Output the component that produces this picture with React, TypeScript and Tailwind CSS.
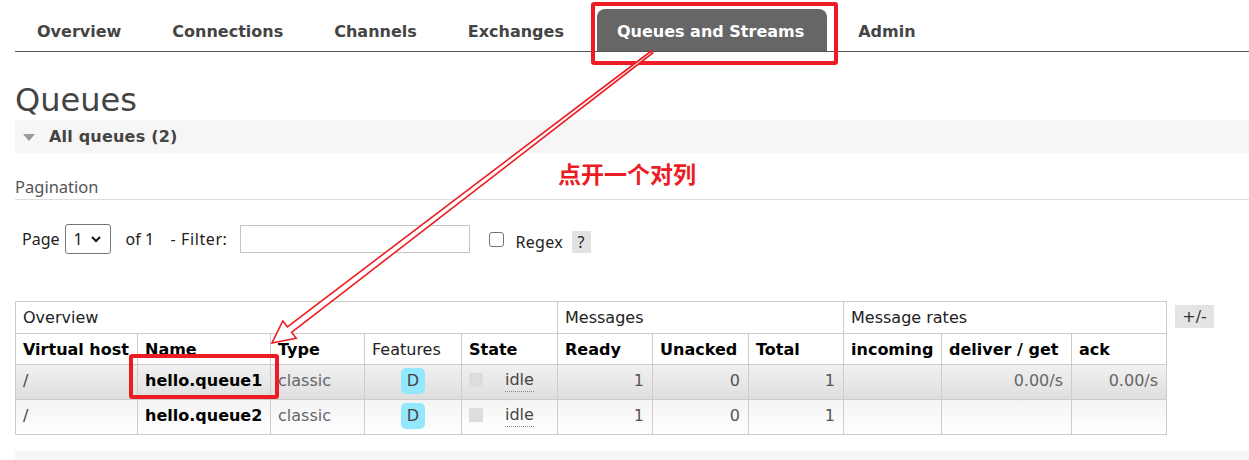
import React from "react";

const V = { fontFamily: '"DejaVu Sans", Verdana, sans-serif' };
const S = { fontFamily: '"Noto Sans", "Open Sans", sans-serif' };

const tabs = ["Overview", "Connections", "Channels", "Exchanges", "Queues and Streams", "Admin"];

function Badge() {
  return (
    <span className="inline-flex items-center justify-center w-[24px] h-[26px] rounded-[5px] bg-[#93e8fd] text-[#444] text-[16px]">D</span>
  );
}

function State() {
  return (
    <div className="flex items-start">
      <span className="inline-block w-[14px] h-[14px] bg-[#dddddd] mt-[7px]"></span>
      <span className="ml-[22px] mt-[2px] text-[#444] border-b border-dotted border-[#888] leading-[23px]">idle</span>
    </div>
  );
}

export default function App() {
  const th = "border border-[#cccccc] px-[7px] text-left align-middle";
  const td = "border border-[#cccccc] px-[7px] align-top pt-[4px]";
  const rows = [
    { name: "hello.queue1", del: "0.00/s", ack: "0.00/s", bg: "bg-gradient-to-b from-[#f1f1f1] to-[#dedede]" },
    { name: "hello.queue2", del: "", ack: "", bg: "bg-gradient-to-b from-[#f4f4f4] to-[#ffffff]" },
  ];
  return (
    <div className="relative w-[1249px] h-[460px] overflow-hidden bg-white text-[16px] leading-6" style={V}>
      <div className="pl-[15px]">
        {/* tabs */}
        <div className="flex items-end pt-[9px] border-b border-[#555555] pl-[2px] gap-[11px]">
          {tabs.map((t) => {
            const active = t === "Queues and Streams";
            return (
              <div
                key={t}
                className={
                  "h-[42px] flex items-center pt-[3px] font-bold text-[16px] " +
                  (active
                    ? "bg-[#666666] text-white rounded-t-[8px] ml-[2px] pl-[20px] pr-[23px]"
                    : "px-5 text-[#444444]")
                }
              >
                {t}
              </div>
            );
          })}
        </div>

        <h1 className="mt-[30px] text-[32px] leading-[36px] text-[#444444] font-normal">Queues</h1>

        <div className="mt-[2px] h-[33px] bg-[#f6f6f6] flex items-center pl-[8px]">
          <svg width="12" height="7" viewBox="0 0 12 7" className="mt-[1px]">
            <polygon points="0,0 12,0 6,7" fill="#999999" />
          </svg>
          <span className="ml-[14px] font-bold text-[#444444] tracking-[0.2px]">All queues (2)</span>
        </div>

        <div className="mt-[23px] border-b border-[#dddddd] pb-[2px] text-[16.5px] leading-[21px] text-[#555555]" style={S}>
          Pagination
        </div>

        <div className="mt-[24px] h-[30px] flex items-center pl-[7px] text-[16px] text-[#222]" style={S}>
          <span>Page</span>
          <div className="ml-[5px] w-[46px] h-[30px] border border-[#767676] rounded-[3px] flex items-center pl-[8px]">
            <span>1</span>
            <svg width="10" height="7" viewBox="0 0 10 7" className="ml-[8px]">
              <polyline points="1,1 5,5 9,1" fill="none" stroke="#111" strokeWidth="2" />
            </svg>
          </div>
          <span className="ml-[15px] w-[31px] whitespace-nowrap">of 1</span>
          <span className="ml-[14px] w-[62px] whitespace-nowrap tracking-[0.6px]">- Filter:</span>
          <div className="ml-[7px] w-[230px] h-[28px] border border-[#c4c4c4]"></div>
          <div className="ml-[19px] w-[15px] h-[15px] border border-[#767676] rounded-[3px]"></div>
          <span className="ml-[12px] mt-[5px] w-[50px] tracking-[0.3px]">Regex</span>
          <span className="ml-[6px] mt-[5px] w-[19px] h-[22px] bg-[#e2e2e2] flex items-center justify-center">?</span>
        </div>

        <div className="mt-[47px] flex items-start gap-[8px]">
          <table className="border-collapse table-fixed w-[1151px] text-[16px]">
            <colgroup>
              <col className="w-[122px]" />
              <col className="w-[133px]" />
              <col className="w-[94px]" />
              <col className="w-[97px]" />
              <col className="w-[96px]" />
              <col className="w-[95px]" />
              <col className="w-[96px]" />
              <col className="w-[95px]" />
              <col className="w-[98px]" />
              <col className="w-[130px]" />
              <col className="w-[95px]" />
            </colgroup>
            <thead>
              <tr className="h-[32px] text-[#222222]">
                <th colSpan={5} className={th + " font-normal"}>Overview</th>
                <th colSpan={3} className={th + " font-normal"}>Messages</th>
                <th colSpan={3} className={th + " font-normal"}>Message rates</th>
              </tr>
              <tr className="h-[31px] text-black">
                <th className={th + " font-bold whitespace-nowrap pt-[2px]"}>Virtual host</th>
                <th className={th + " font-bold pt-[2px]"}>Name</th>
                <th className={th + " font-bold pt-[2px]"}>Type</th>
                <th className={th + " font-normal text-[#222] pt-[2px]"}>Features</th>
                <th className={th + " font-bold pt-[2px]"}>State</th>
                <th className={th + " font-bold pt-[2px]"}>Ready</th>
                <th className={th + " font-bold pt-[2px]"}>Unacked</th>
                <th className={th + " font-bold pt-[2px]"}>Total</th>
                <th className={th + " font-bold pt-[2px]"}>incoming</th>
                <th className={th + " font-bold whitespace-nowrap pt-[2px]"}>deliver / get</th>
                <th className={th + " font-bold pt-[2px]"}>ack</th>
              </tr>
            </thead>
            <tbody>
              {rows.map((r) => (
                <tr key={r.name} className={"h-[35px] " + r.bg}>
                  <td className={td + " text-[#444]"}>/</td>
                  <td className={td + " font-bold text-black"}>{r.name}</td>
                  <td className={td + " text-[#666]"}>classic</td>
                  <td className={"border border-[#cccccc] align-top pt-[3px] text-center"}><Badge /></td>
                  <td className={"border border-[#cccccc] px-[7px] align-top pt-[1px]"}><State /></td>
                  <td className={td + " text-right text-[#555] pr-[8px]"}>1</td>
                  <td className={td + " text-right text-[#555] pr-[8px]"}>0</td>
                  <td className={td + " text-right text-[#555] pr-[8px]"}>1</td>
                  <td className={td}></td>
                  <td className={td + " text-right text-[#666] pr-[8px]"}>{r.del}</td>
                  <td className={td + " text-right text-[#666] pr-[8px]"}>{r.ack}</td>
                </tr>
              ))}
            </tbody>
          </table>
          <div className="mt-[4px] w-[39px] h-[23px] bg-[#e4e4e4] flex items-center justify-center text-[#333] text-[16px]">+/-</div>
        </div>

        <div className="mt-[16px] h-[20px] bg-[#f6f6f6]"></div>
      </div>

      {/* annotations */}
      <div className="absolute left-[591px] top-[2px] w-[247px] h-[63px] border-[4px] border-[#ed1c24] rounded-[3px] pointer-events-none"></div>
      <div className="absolute left-[129px] top-[354px] w-[150px] h-[45px] border-[4px] border-[#ed1c24] rounded-[3px] pointer-events-none"></div>
      <div
        className="absolute left-[558px] top-[160px] text-[23px] leading-[26px] font-bold text-[#ed1c24]"
        style={{ fontFamily: '"Noto Sans CJK SC", "Noto Sans", sans-serif' }}
      >
        点开一个对列
      </div>
      <svg className="absolute left-0 top-0 pointer-events-none" width="1249" height="460" viewBox="0 0 1249 460">
        <polygon
          points="272,343 296.2,338.3 291.6,332.4 652.7,53 651.3,51 287.4,326.8 282.8,320.9"
          fill="white"
          stroke="#ed1c24"
          strokeWidth="1.6"
          strokeLinejoin="miter"
        />
      </svg>
    </div>
  );
}
